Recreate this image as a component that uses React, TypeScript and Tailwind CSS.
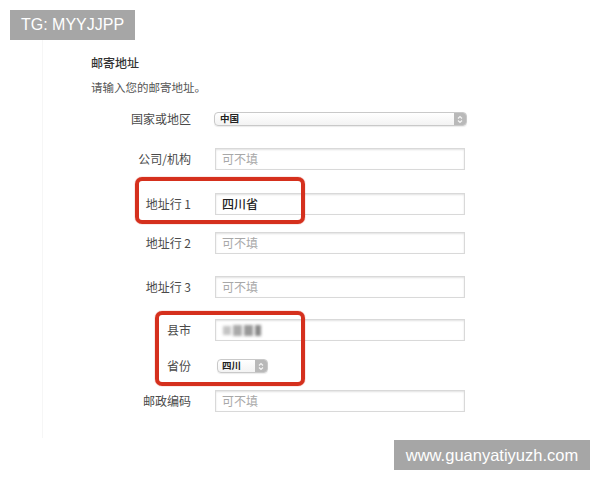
const font = { fontFamily: '"Noto Sans CJK SC", "Noto Sans", sans-serif' };

function Stepper({ className }: { className: string }) {
  return (
    <div className={`flex items-center justify-center self-stretch ${className}`}>
      <svg width="6" height="9" viewBox="0 0 6 9" fill="none" stroke="#f4f4f4" strokeWidth="1.2">
        <path d="M1 3.5 3 1.5 5 3.5" />
        <path d="M1 5.5 3 7.5 5 5.5" />
      </svg>
    </div>
  );
}

function TextInput({ value, placeholder }: { value?: string; placeholder?: string }) {
  return (
    <div className="flex h-[22px] w-[250px] items-center border border-[#d9d9d9] bg-white pl-[6px] shadow-[inset_0_1px_2px_rgba(0,0,0,0.12)]">
      {value ? (
        <span className="text-[12px] font-medium leading-none text-[#222]">{value}</span>
      ) : (
        <span className="text-[12px] leading-none text-[#a8a8a8]">{placeholder}</span>
      )}
    </div>
  );
}

function Row({ label, mt, children }: { label: string; mt: string; children: React.ReactNode }) {
  return (
    <div className={`flex h-[22px] items-center ${mt}`}>
      <div className="w-[101px] pr-[1px] text-right text-[12px] leading-none text-[#4a4a4a]">{label}</div>
      <div className="ml-[23px] flex items-center">{children}</div>
    </div>
  );
}

export default function App() {
  return (
    <div className="relative h-[480px] w-[600px] overflow-hidden bg-white" style={font}>
      <div className="ml-[42px] mt-[40px] h-[398px] border-l border-[#f6f6f6] pl-[48px] pt-[15px]">
        <div className="h-[16px] text-[12px] font-medium leading-[16px] text-[#333]">邮寄地址</div>
        <div className="mt-[8px] h-[16px] text-[11.5px] leading-[16px] text-[#555]">请输入您的邮寄地址。</div>

        <Row label="国家或地区" mt="mt-[13px]">
          <div className="-ml-[1px] flex h-[14px] w-[253px] items-center overflow-hidden rounded-[4px] border border-[#c9c9c9] bg-gradient-to-b from-white to-[#f3f3f3] shadow-[0_1px_1px_rgba(0,0,0,0.08)]">
            <span className="ml-[5px] flex-1 text-[9.5px] font-semibold leading-none text-[#222]">中国</span>
            <Stepper className="w-[12px] bg-[#b9b9b9]" />
          </div>
        </Row>

        <Row label="公司/机构" mt="mt-[18px]">
          <TextInput placeholder="可不填" />
        </Row>

        <Row label="地址行 1" mt="mt-[23px]">
          <TextInput value="四川省" />
        </Row>

        <Row label="地址行 2" mt="mt-[17px]">
          <TextInput placeholder="可不填" />
        </Row>

        <Row label="地址行 3" mt="mt-[22px]">
          <TextInput placeholder="可不填" />
        </Row>

        <Row label="县市" mt="mt-[21px]">
          <div className="flex h-[22px] w-[250px] items-center gap-[2px] border border-[#d9d9d9] bg-white pl-[7px] shadow-[inset_0_1px_2px_rgba(0,0,0,0.12)]">
            <div className="h-[9px] w-[8px] bg-[#c4c4c4] blur-[1.5px]" />
            <div className="h-[11px] w-[9px] bg-[#aaaaaa] blur-[1.5px]" />
            <div className="h-[11px] w-[9px] bg-[#999] blur-[1.5px]" />
            <div className="h-[11px] w-[6px] bg-[#888] blur-[1.5px]" />
          </div>
        </Row>

        <Row label="省份" mt="mt-[14px]">
          <div className="ml-[2px] flex h-[14px] w-[51px] items-center overflow-hidden rounded-[4px] border border-[#c9c9c9] bg-gradient-to-b from-white to-[#f3f3f3] shadow-[0_1px_1px_rgba(0,0,0,0.08)]">
            <span className="ml-[4px] flex-1 text-[9.5px] font-semibold leading-none text-[#222]">四川</span>
            <Stepper className="w-[12px] bg-[#b9b9b9]" />
          </div>
        </Row>

        <Row label="邮政编码" mt="mt-[13px]">
          <TextInput placeholder="可不填" />
        </Row>
      </div>

      {/* highlight boxes */}
      <div className="absolute left-[135px] top-[177px] h-[47px] w-[170px] rounded-[7px] border-[4px] border-[#d5301d] shadow-[0_0_1px_#d5301d]" />
      <div className="absolute left-[155px] top-[311px] h-[75px] w-[150px] rounded-[7px] border-[4px] border-[#d5301d] shadow-[0_0_1px_#d5301d]" />

      {/* watermarks */}
      <div
        className="absolute left-[10px] top-[10px] flex h-[30px] w-[125px] items-center justify-center bg-[#a6a6a6] text-[16px] text-white"
        style={{ fontFamily: '"Liberation Sans", Arial, sans-serif' }}
      >
        TG: MYYJJPP
      </div>
      <div
        className="absolute left-[394px] top-[440px] flex h-[30px] w-[196px] items-center justify-center bg-[#a6a6a6] text-[16.5px] text-white"
        style={{ fontFamily: '"Liberation Sans", Arial, sans-serif' }}
      >
        www.guanyatiyuzh.com
      </div>
    </div>
  );
}
